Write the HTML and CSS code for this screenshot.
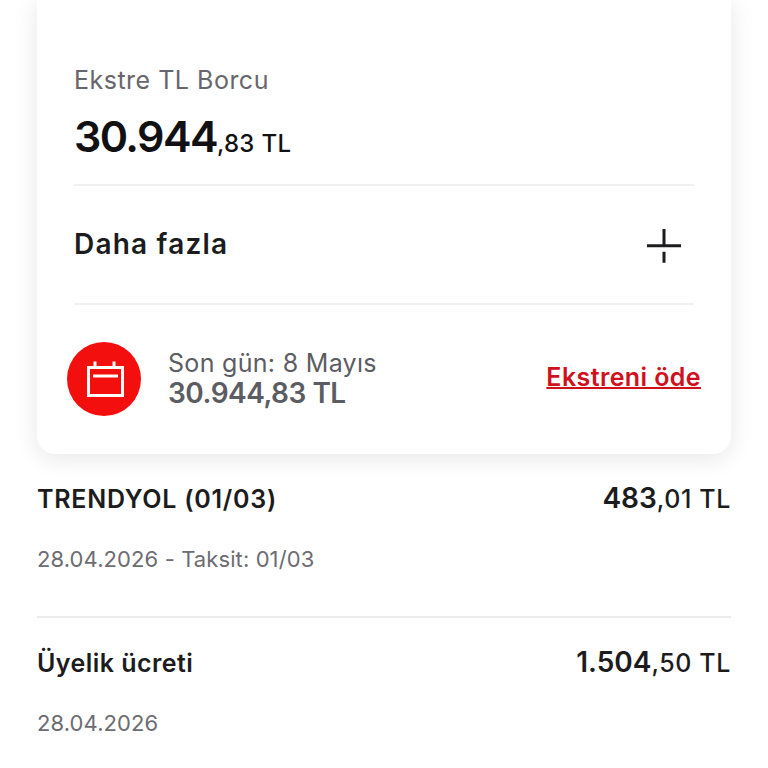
FILE: index.html
```html
<!DOCTYPE html>
<html lang="tr">
<head>
<meta charset="utf-8">
<title>Ekstre</title>
<link rel="stylesheet" href="styles.css">
</head>
<body>
<main class="page">
  <section class="card">
    <div class="debt">
      <div class="debt-label">Ekstre TL Borcu</div>
      <div class="debt-amount"><span class="whole">30.944</span><span class="rest">,83 TL</span></div>
    </div>
    <div class="more">
      <span class="more-label">Daha fazla</span>
      <svg class="plus" width="34" height="34" viewBox="0 0 34 34" aria-hidden="true">
        <path d="M0 16.7H34M17 0V16M17 22.7V33.7" fill="none" stroke="#1c1c1e" stroke-width="3"/>
      </svg>
    </div>
    <div class="due">
      <div class="due-icon">
        <svg width="40" height="36" viewBox="0 0 40 36" aria-hidden="true">
          <path d="M4.5 6.5H38.5V34.5H4.5ZM9 15H34M11 0.5V6M30 0.5V6" fill="none" stroke="#fff" stroke-width="3"/>
        </svg>
      </div>
      <div class="due-text">
        <div class="due-date">Son gün: 8 Mayıs</div>
        <div class="due-amount">30.944,83 TL</div>
      </div>
      <a class="pay" href="#">Ekstreni öde</a>
    </div>
  </section>
  <section class="tx-list">
    <article class="tx">
      <div class="tx-top"><span class="tx-name tx-name-caps">TRENDYOL (01/03)</span><span class="tx-amount"><span class="tx-whole">483</span>,01 TL</span></div>
      <div class="tx-meta">28.04.2026 - Taksit: 01/03</div>
    </article>
    <article class="tx">
      <div class="tx-top"><span class="tx-name">Üyelik ücreti</span><span class="tx-amount"><span class="tx-whole">1.504</span>,50 TL</span></div>
      <div class="tx-meta">28.04.2026</div>
    </article>
  </section>
</main>
</body>
</html>
```
FILE: styles.css
```css
* { box-sizing: border-box; }
html, body { margin: 0; padding: 0; }
body {
  width: 768px;
  height: 768px;
  overflow: hidden;
  background: #fff;
  font-family: "Inter", "Liberation Sans", sans-serif;
  color: #1c1c1e;
}
.page { padding: 0 37px; }
.card {
  height: 454px;
  padding: 65px 37px 0 37px;
  background: #fff;
  border-radius: 0 0 18px 18px;
  box-shadow: 0 4px 24px rgba(0,0,0,.10);
  display: flex;
  flex-direction: column;
}
.debt { height: 121px; border-bottom: 2px solid #f0f0f1; }
.debt-label { font-size: 25px; line-height: 30px; letter-spacing: .5px; color: #66666c; }
.debt-amount { margin-top: 15px; line-height: 52px; font-weight: 600; white-space: nowrap; color: #111113; }
.whole { font-size: 43px; letter-spacing: -1.6px; }
.rest { font-size: 24px; font-weight: 500; letter-spacing: .3px; }
.more {
  height: 119px;
  border-bottom: 2px solid #f0f0f1;
  display: flex;
  align-items: center;
  justify-content: space-between;
  padding-right: 13px;
}
.more-label { font-size: 28px; font-weight: 600; letter-spacing: 1.2px; margin-top: -2px; }
.plus { margin-top: 3px; }
.due { display: flex; align-items: center; height: 146px; margin: 0 -7px 0 -7px; }
.due-icon {
  width: 74px; height: 74px; border-radius: 50%;
  background: #f40f0f;
  display: flex; align-items: center; justify-content: center;
  margin-right: 27px; margin-top: 2px; flex: none;
}
.due-text { flex: 1; color: #5c5c63; }
.due-date { font-size: 25px; line-height: 29px; letter-spacing: .3px; }
.due-amount { font-size: 28px; line-height: 30px; font-weight: 600; letter-spacing: -.5px; }
.pay { color: #d0111b; font-size: 25px; font-weight: 600; letter-spacing: .4px; white-space: nowrap; margin-top: -2px; text-decoration-thickness: 2px; }
.tx { border-bottom: 2px solid #ececee; height: 164px; padding-top: 27px; }
.tx:last-child { border-bottom: 0; }
.tx-top { display: flex; justify-content: space-between; align-items: baseline; font-weight: 600; }
.tx-name { font-size: 25px; letter-spacing: .45px; }
.tx-name-caps { letter-spacing: .75px; }
.tx-amount { font-size: 25px; font-weight: 500; letter-spacing: .6px; }
.tx-whole { font-size: 28px; font-weight: 600; letter-spacing: 0; }
.tx-meta { margin-top: 31px; font-size: 22px; letter-spacing: .1px; color: #6c6c72; }
```
